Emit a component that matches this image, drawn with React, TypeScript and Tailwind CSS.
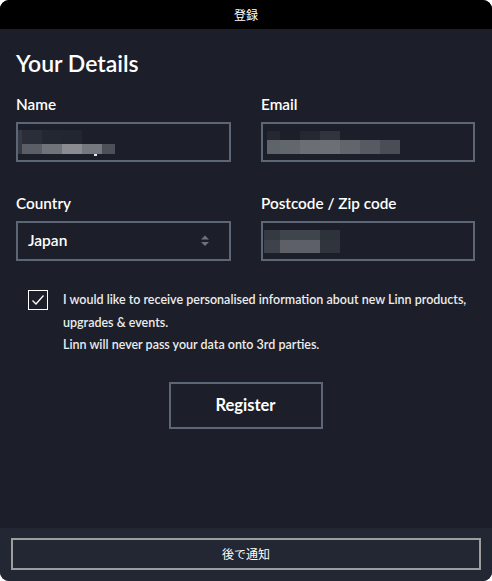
import React from "react";

type Cell = { x: number; y: number; w: number; h: number; c: string };

function Pixelated({ cells, className }: { cells: Cell[]; className?: string }) {
  return (
    <div className={"relative " + (className ?? "")}>
      {cells.map((c, i) => (
        <div
          key={i}
          className="absolute"
          style={{ left: c.x, top: c.y, width: c.w, height: c.h, background: c.c }}
        />
      ))}
    </div>
  );
}

const nameCells: Cell[] = [
  { x: 0, y: 4, w: 4, h: 24, c: "#353944" },
  { x: 4, y: 4, w: 20, h: 14, c: "#2a2e38" },
  { x: 24, y: 4, w: 20, h: 14, c: "#232731" },
  { x: 44, y: 4, w: 20, h: 14, c: "#222631" },
  { x: 4, y: 18, w: 20, h: 10, c: "#5a5e67" },
  { x: 24, y: 18, w: 20, h: 10, c: "#70737a" },
  { x: 44, y: 18, w: 20, h: 10, c: "#8a8c91" },
  { x: 64, y: 18, w: 20, h: 10, c: "#75787f" },
  { x: 84, y: 18, w: 13, h: 10, c: "#4d5059" },
  { x: 76, y: 28, w: 3, h: 2, c: "#e5e7eb" },
];

const emailCells: Cell[] = [
  { x: 0, y: 0, w: 13, h: 9, c: "#252832" },
  { x: 33, y: 0, w: 20, h: 9, c: "#252832" },
  { x: 53, y: 0, w: 20, h: 9, c: "#30343d" },
  { x: 0, y: 9, w: 13, h: 14, c: "#5f636a" },
  { x: 13, y: 9, w: 20, h: 14, c: "#62666d" },
  { x: 33, y: 9, w: 20, h: 14, c: "#6b6e75" },
  { x: 53, y: 9, w: 20, h: 14, c: "#6c6f76" },
  { x: 73, y: 9, w: 20, h: 14, c: "#62656c" },
  { x: 93, y: 9, w: 20, h: 14, c: "#575a62" },
  { x: 113, y: 9, w: 20, h: 14, c: "#4a4d56" },
];

const postCells: Cell[] = [
  { x: 0, y: 0, w: 16, h: 10, c: "#353942" },
  { x: 16, y: 0, w: 40, h: 10, c: "#40444d" },
  { x: 56, y: 0, w: 20, h: 10, c: "#2e323b" },
  { x: 0, y: 10, w: 16, h: 13, c: "#3e424b" },
  { x: 16, y: 10, w: 40, h: 13, c: "#5d6067" },
  { x: 56, y: 10, w: 20, h: 13, c: "#30343d" },
];

const font = { fontFamily: "Lato, 'Noto Sans CJK JP', sans-serif" };
const cjk = { fontFamily: "'Noto Sans CJK JP', 'Noto Sans', sans-serif" };

function Label({ children }: { children: React.ReactNode }) {
  return (
    <div className="text-[15.3px] leading-[20px] font-semibold text-white" style={font}>
      {children}
    </div>
  );
}

export default function App() {
  return (
    <div className="w-[492px] h-[581px] bg-white">
      <div className="w-full h-full rounded-[9px] overflow-hidden flex flex-col bg-[#1c1f29]">
        <div
          className="h-[29px] bg-black text-white text-[12px] flex items-center justify-center"
          style={cjk}
        >
          登録
        </div>
        <div className="flex-1 pl-4 pr-[17px] pt-[18px]">
          <div className="text-[23px] leading-[32px] font-semibold text-white" style={font}>
            Your Details
          </div>
          <div className="mt-[15px] grid grid-cols-[215px_214px] gap-x-[30px]">
            <div className="flex flex-col">
              <Label>Name</Label>
              <div className="mt-2 h-[40px] border-2 border-[#5d6674]">
                <Pixelated cells={nameCells} className="mt-[2px] h-[30px]" />
              </div>
            </div>
            <div className="flex flex-col">
              <Label>Email</Label>
              <div className="mt-2 h-[40px] border-2 border-[#5d6674] pl-[4px] pt-[7px]">
                <Pixelated cells={emailCells} className="h-[23px]" />
              </div>
            </div>
            <div className="flex flex-col mt-[31px]">
              <Label>Country</Label>
              <div className="mt-2 h-[40px] border-2 border-[#5d6674] flex items-center pl-[10px] pr-[19px]">
                <span className="flex-1 text-[15.5px] font-semibold text-white" style={font}>
                  Japan
                </span>
                <svg width="10" height="12" viewBox="0 0 10 12">
                  <path d="M5 0.5 L9 4.5 L1 4.5 Z" fill="#6b7280" />
                  <path d="M1 7 L9 7 L5 11 Z" fill="#6b7280" />
                </svg>
              </div>
            </div>
            <div className="flex flex-col mt-[31px]">
              <Label>Postcode / Zip code</Label>
              <div className="mt-2 h-[40px] border-2 border-[#5d6674] pl-[1px] pt-[7px]">
                <Pixelated cells={postCells} className="h-[23px]" />
              </div>
            </div>
          </div>
          <div className="mt-[29px] flex pl-3">
            <div className="w-[20px] h-[20px] border-[1.5px] border-white flex items-center justify-center shrink-0">
              <svg width="14" height="12" viewBox="0 0 14 12">
                <path d="M1.5 6.5 L5 10 L12.5 1.5" stroke="white" strokeWidth="1.3" fill="none" />
              </svg>
            </div>
            <div
              className="ml-[15px] -mt-[1px] text-[12.5px] leading-[22.5px] font-semibold text-[#ececec] whitespace-nowrap"
              style={font}
            >
              <div>I would like to receive personalised information about new Linn products,</div>
              <div>upgrades &amp; events.</div>
              <div>Linn will never pass your data onto 3rd parties.</div>
            </div>
          </div>
          <div className="mt-[25px] flex justify-center">
            <div
              className="w-[154px] h-[47px] border-2 border-[#5d6674] flex items-center justify-center text-[16.5px] font-bold text-white"
              style={font}
            >
              Register
            </div>
          </div>
        </div>
        <div className="h-[53px] bg-[#222733] pt-[10px] pl-[11px] pr-[11px]">
          <div
            className="h-[32px] border-2 border-[#9d9d9d] flex items-center justify-center text-[12px] text-white"
            style={cjk}
          >
            後で通知
          </div>
        </div>
      </div>
    </div>
  );
}
